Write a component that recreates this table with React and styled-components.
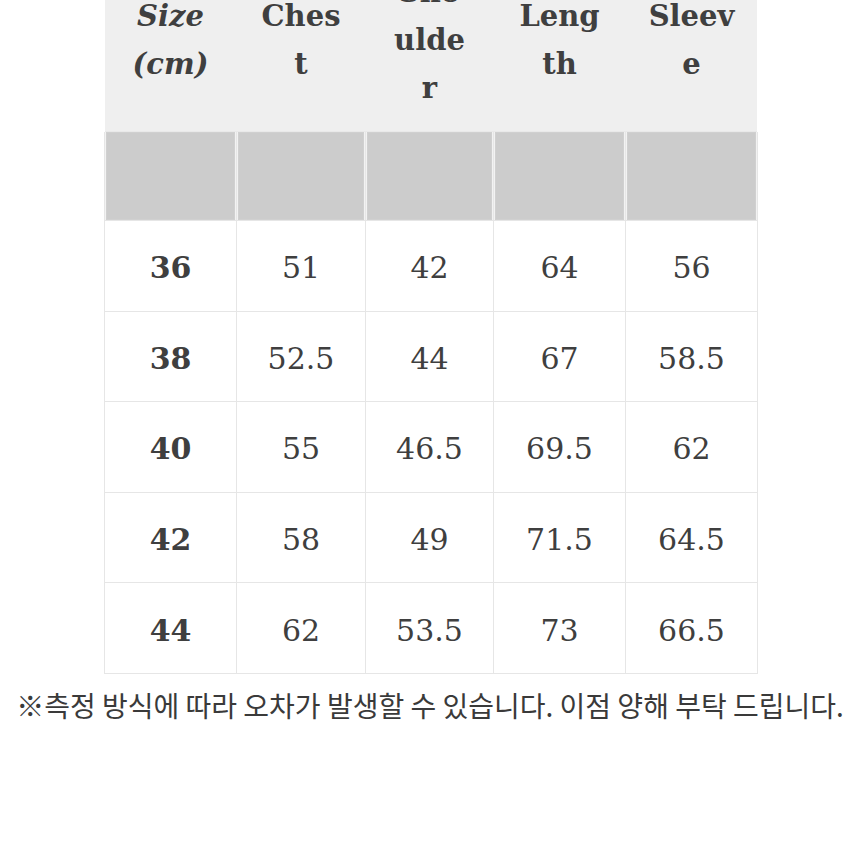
import React from "react";
import styled, { createGlobalStyle } from "styled-components";

const Global = createGlobalStyle`
  html, body { margin: 0; padding: 0; background: #ffffff; }
  body { width: 856px; height: 856px; overflow: hidden; }
`;

const Page = styled.div`
  width: 856px;
  height: 856px;
  display: flex;
  flex-direction: column;
  align-items: flex-start;
`;

const Table = styled.div`
  margin-top: -51px;
  margin-left: 105px;
  width: 652px;
  display: flex;
  flex-direction: column;
  font-family: "DejaVu Serif", serif;
  color: #3f3f3f;
`;

const Cols = "131px 128px 127px 131px 131px";

const HeadRow = styled.div`
  display: grid;
  grid-template-columns: ${Cols};
  column-gap: 1px;
  height: 182px;
  background: #efefef;
  border-bottom: 1px solid #e9e9e9;
`;

const HeadCell = styled.div`
  display: flex;
  flex-direction: column;
  align-items: center;
  justify-content: center;
  text-align: center;
  font-size: 29px;
  font-weight: bold;
  font-style: ${(p) => (p.$italic ? "italic" : "normal")};
  line-height: 48px;
`;

const Grid = styled.div`
  display: grid;
  grid-template-columns: ${Cols};
  gap: 1px;
  background: #e6e6e6;
  border: 1px solid #e6e6e6;
  border-top: none;
  margin-left: -1px;
  width: 652px;
`;

const BlankCell = styled.div`
  height: 88px;
  background: #cccccc;
  box-shadow: inset 0 0 0 1px #d0d0d0;
  border-right: 1px solid #f2f2f2;
  border-left: 1px solid #f2f2f2;
`;

const Cell = styled.div`
  height: 89.6px;
  background: #ffffff;
  display: flex;
  align-items: center;
  justify-content: center;
  font-size: 30px;
  font-weight: ${(p) => (p.$bold ? "bold" : "normal")};
  padding-top: 4px;
  box-sizing: border-box;
`;

const Note = styled.p`
  margin: 12px 0 0 0;
  width: 856px;
  text-align: center;
  font-family: "Noto Sans CJK KR", "Noto Sans", sans-serif;
  font-size: 28px;
  color: #3a3a3a;
  line-height: 38px;
  padding-left: 4px;
  box-sizing: border-box;
  white-space: nowrap;
`;

const headers = [
  { lines: ["Size", "(cm)"], italic: true },
  { lines: ["Ches", "t"] },
  { lines: ["Sho", "ulde", "r"] },
  { lines: ["Leng", "th"] },
  { lines: ["Sleev", "e"] },
];

const rows = [
  ["36", "51", "42", "64", "56"],
  ["38", "52.5", "44", "67", "58.5"],
  ["40", "55", "46.5", "69.5", "62"],
  ["42", "58", "49", "71.5", "64.5"],
  ["44", "62", "53.5", "73", "66.5"],
];

export default function App() {
  return (
    <Page>
      <Global />
      <Table>
        <HeadRow>
          {headers.map((h, i) => (
            <HeadCell key={i} $italic={h.italic}>
              {h.lines.map((l, j) => (
                <span key={j}>{l}</span>
              ))}
            </HeadCell>
          ))}
        </HeadRow>
        <Grid>
          {headers.map((_, i) => (
            <BlankCell key={"b" + i} />
          ))}
          {rows.map((r, ri) =>
            r.map((v, ci) => (
              <Cell key={ri + "-" + ci} $bold={ci === 0}>
                {v}
              </Cell>
            ))
          )}
        </Grid>
      </Table>
      <Note>※측정 방식에 따라 오차가 발생할 수 있습니다. 이점 양해 부탁 드립니다.</Note>
    </Page>
  );
}
